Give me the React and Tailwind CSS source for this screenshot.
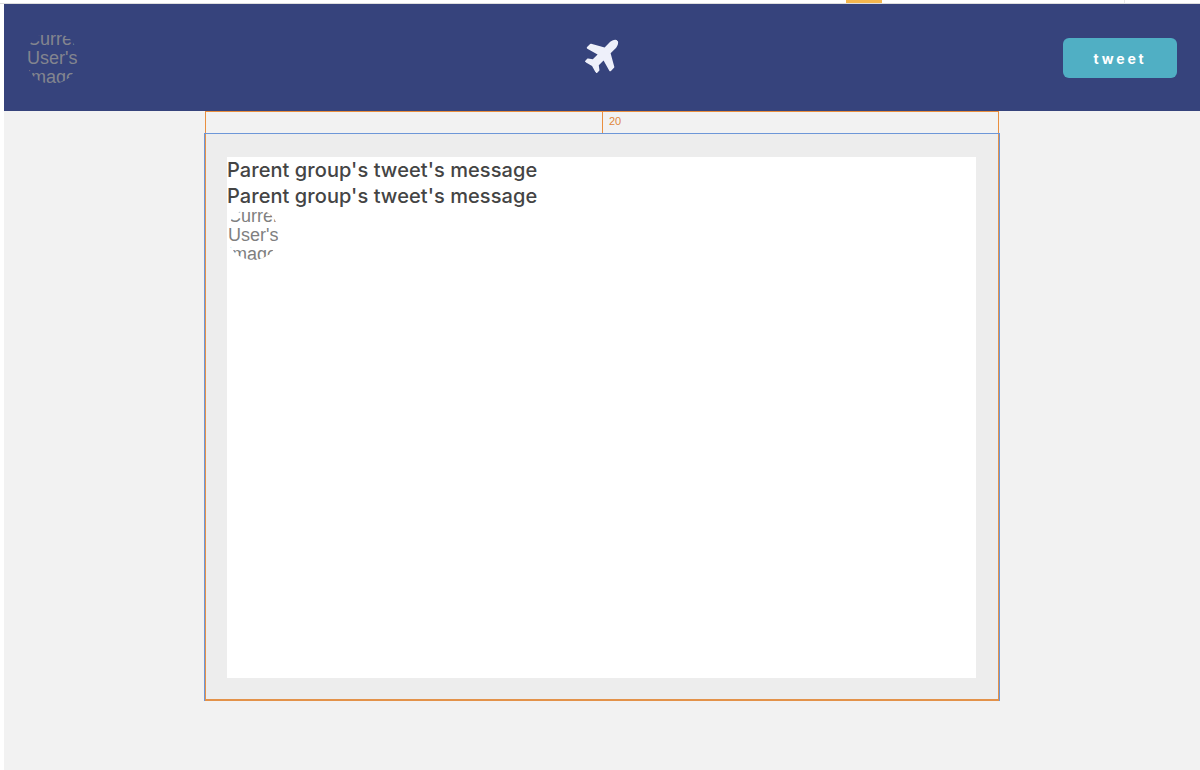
import React from 'react'
import { FaPlane } from 'react-icons/fa'

function Avatar({ className }){
  return (
    <div className={`w-[52px] h-[52px] rounded-full overflow-hidden shrink-0 flex items-center pl-px text-left text-[18px] leading-[19px] font-['Liberation_Sans',sans-serif] ${className}`}>
      <span className="block w-[50px] shrink-0 pt-[2px]">Current User's image</span>
    </div>
  )
}

export default function App(){
  return (
    <div className="w-[1200px] h-[770px] bg-white overflow-hidden flex flex-col">
      {/* top strip */}
      <div className="h-[4px] flex shrink-0 bg-white border-b border-[#dedede]">
        <div className="ml-[846px] w-[36px] h-[3px] bg-[#f5b74e]" />
        <div className="ml-[242px] w-px h-[3px] bg-[#e8e8e8]" />
      </div>

      <div className="flex-1 ml-[4px] flex flex-col bg-[#f2f2f2]">
        <header className="h-[107px] shrink-0 bg-[#36437c] flex items-center justify-between pl-[22px] pr-[23px]">
          <Avatar className="text-[#83858f]" />
          <FaPlane className="text-[#eef0fa] text-[38px] -rotate-45 ml-[66px] -mt-[7px]" />
          <button className="w-[114px] h-[40px] pt-[2px] rounded-[6px] bg-[#50afc4] text-white text-[14px] font-bold tracking-[2.8px] font-['Inter',sans-serif]">
            tweet
          </button>
        </header>

        {/* margin guide, then the measured box */}
        <div className="w-[794px] ml-[201px] h-[22px] shrink-0 border-x border-t border-[#e98f3f] flex">
          <div className="w-[397px] border-r border-[#e98f3f]" />
          <span className="pl-[6px] text-[11px] leading-[18px] text-[#e0863a] font-['Liberation_Sans',sans-serif]">20</span>
        </div>

        <main className="w-[796px] h-[568px] ml-[200px] shrink-0 bg-[#ededed] border-x border-t border-[#6d97d8] p-[23px] pl-[22px] relative">
          <div className="absolute inset-0 border-x border-b-2 border-[#e3924a] pointer-events-none" />
          <div className="h-[521px] w-[749px] bg-white flex flex-col items-start">
            <p className="text-[20px] leading-[26px] font-medium tracking-[0.07px] text-[#444444] font-['Inter',sans-serif]">Parent group's tweet's message</p>
            <p className="text-[20px] leading-[26px] font-medium tracking-[0.07px] text-[#444444] font-['Inter',sans-serif]">Parent group's tweet's message</p>
            <Avatar className="text-[#7f7f7f] -mt-px" />
          </div>
        </main>
      </div>
    </div>
  )
}
